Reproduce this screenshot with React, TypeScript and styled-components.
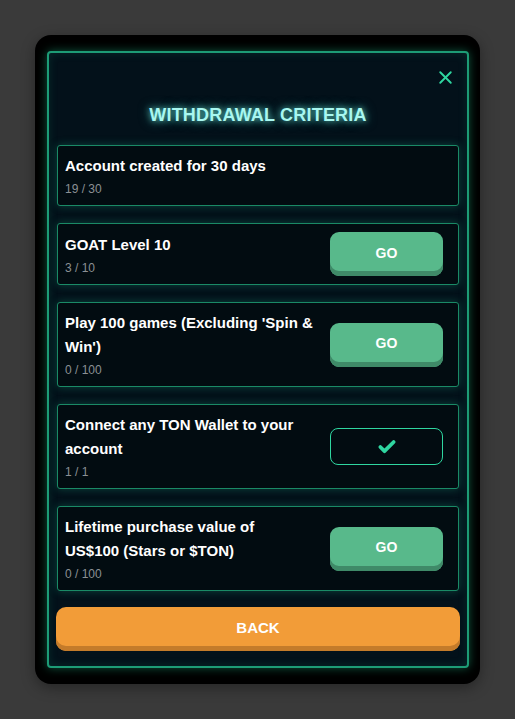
import React from 'react';
import styled, { createGlobalStyle } from 'styled-components';
import { X, Check } from 'lucide-react';

const GlobalStyle = createGlobalStyle`
  html, body {
    margin: 0;
    padding: 0;
    background: #3a3a3a;
    font-family: "Liberation Sans", Arial, sans-serif;
  }
  * { box-sizing: border-box; }
`;

const Page = styled.div`
  width: 515px;
  height: 719px;
  padding-top: 35px;
  display: flex;
  justify-content: center;
  align-items: flex-start;
`;

const Frame = styled.div`
  width: 445px;
  height: 649px;
  background: #000;
  border-radius: 16px;
  padding: 16px 11px 16px 12px;
  box-shadow: 0 4px 14px rgba(0, 0, 0, 0.35);
`;

const Panel = styled.div`
  height: 100%;
  background: #03111a;
  border: 2px solid #1d9c76;
  border-radius: 4px;
  box-shadow: 0 0 10px rgba(34, 190, 140, 0.45), inset 0 0 10px rgba(34, 190, 140, 0.15);
  padding: 13px 8px 0;
  display: flex;
  flex-direction: column;
`;

const CloseRow = styled.div`
  height: 22px;
  display: flex;
  justify-content: flex-end;
  padding-right: 3px;
`;

const CloseButton = styled.button`
  background: transparent;
  border: none;
  padding: 0;
  width: 22px;
  height: 22px;
  display: flex;
  align-items: center;
  justify-content: center;
  color: #2fd6a0;
  cursor: pointer;
`;

const Title = styled.h2`
  margin: 15px 0 18px;
  height: 24px;
  line-height: 24px;
  text-align: center;
  font-size: 18px;
  font-weight: 700;
  letter-spacing: 0.2px;
  color: #a8f7f0;
  text-shadow: 0 0 6px rgba(110, 240, 225, 0.8), 0 0 12px rgba(80, 220, 210, 0.5);
`;

const List = styled.div`
  display: flex;
  flex-direction: column;
  gap: 17px;
`;

const Card = styled.div`
  display: flex;
  align-items: center;
  justify-content: space-between;
  gap: 12px;
  background: #020c11;
  border: 1px solid #1a8a66;
  border-radius: 3px;
  padding: 8px 15px 8px 7px;
  box-shadow: 0 0 9px rgba(30, 170, 125, 0.35);
`;

const Info = styled.div`
  display: flex;
  flex-direction: column;
  max-width: 255px;
`;

const CardTitle = styled.div`
  font-size: 15px;
  font-weight: 700;
  line-height: 24px;
  color: #fff;
  white-space: pre-line;
`;

const Progress = styled.div`
  margin-top: 3px;
  font-size: 12px;
  line-height: 16px;
  color: #8b9094;
`;

const GoButton = styled.button`
  flex: none;
  width: 113px;
  height: 44px;
  border: none;
  border-radius: 9px;
  background: #58b98b;
  box-shadow: inset 0 -5px 0 #3f8a68;
  padding-bottom: 4px;
  color: #fff;
  font-family: "Liberation Sans", Arial, sans-serif;
  font-size: 14px;
  font-weight: 700;
  cursor: pointer;
`;

const DoneButton = styled.button`
  flex: none;
  width: 113px;
  height: 37px;
  border: 1px solid #2fd6a0;
  border-radius: 8px;
  background: transparent;
  color: #2fd6a0;
  display: flex;
  align-items: center;
  justify-content: center;
`;

const BackButton = styled.button`
  margin: 16px -1px 0;
  height: 44px;
  border: none;
  border-radius: 10px;
  background: #f29c38;
  box-shadow: inset 0 -5px 0 #c47b2a;
  padding-bottom: 4px;
  color: #fff;
  font-family: "Liberation Sans", Arial, sans-serif;
  font-size: 15px;
  font-weight: 700;
  cursor: pointer;
`;

type Criterion = {
  title: string;
  progress: string;
  action?: 'go' | 'done';
};

const criteria: Criterion[] = [
  { title: 'Account created for 30 days', progress: '19 / 30' },
  { title: 'GOAT Level 10', progress: '3 / 10', action: 'go' },
  { title: "Play 100 games (Excluding 'Spin & Win')", progress: '0 / 100', action: 'go' },
  { title: 'Connect any TON Wallet to your account', progress: '1 / 1', action: 'done' },
  { title: 'Lifetime purchase value of\nUS$100 (Stars or $TON)', progress: '0 / 100', action: 'go' },
];

export default function App() {
  return (
    <>
      <GlobalStyle />
      <Page>
        <Frame>
          <Panel>
            <CloseRow>
              <CloseButton>
                <X size={21} strokeWidth={2.2} />
              </CloseButton>
            </CloseRow>
            <Title>WITHDRAWAL CRITERIA</Title>
            <List>
              {criteria.map((c) => (
                <Card key={c.title}>
                  <Info>
                    <CardTitle>{c.title}</CardTitle>
                    <Progress>{c.progress}</Progress>
                  </Info>
                  {c.action === 'go' && <GoButton>GO</GoButton>}
                  {c.action === 'done' && (
                    <DoneButton>
                      <Check size={20} strokeWidth={4.5} />
                    </DoneButton>
                  )}
                </Card>
              ))}
            </List>
            <BackButton>BACK</BackButton>
          </Panel>
        </Frame>
      </Page>
    </>
  );
}
